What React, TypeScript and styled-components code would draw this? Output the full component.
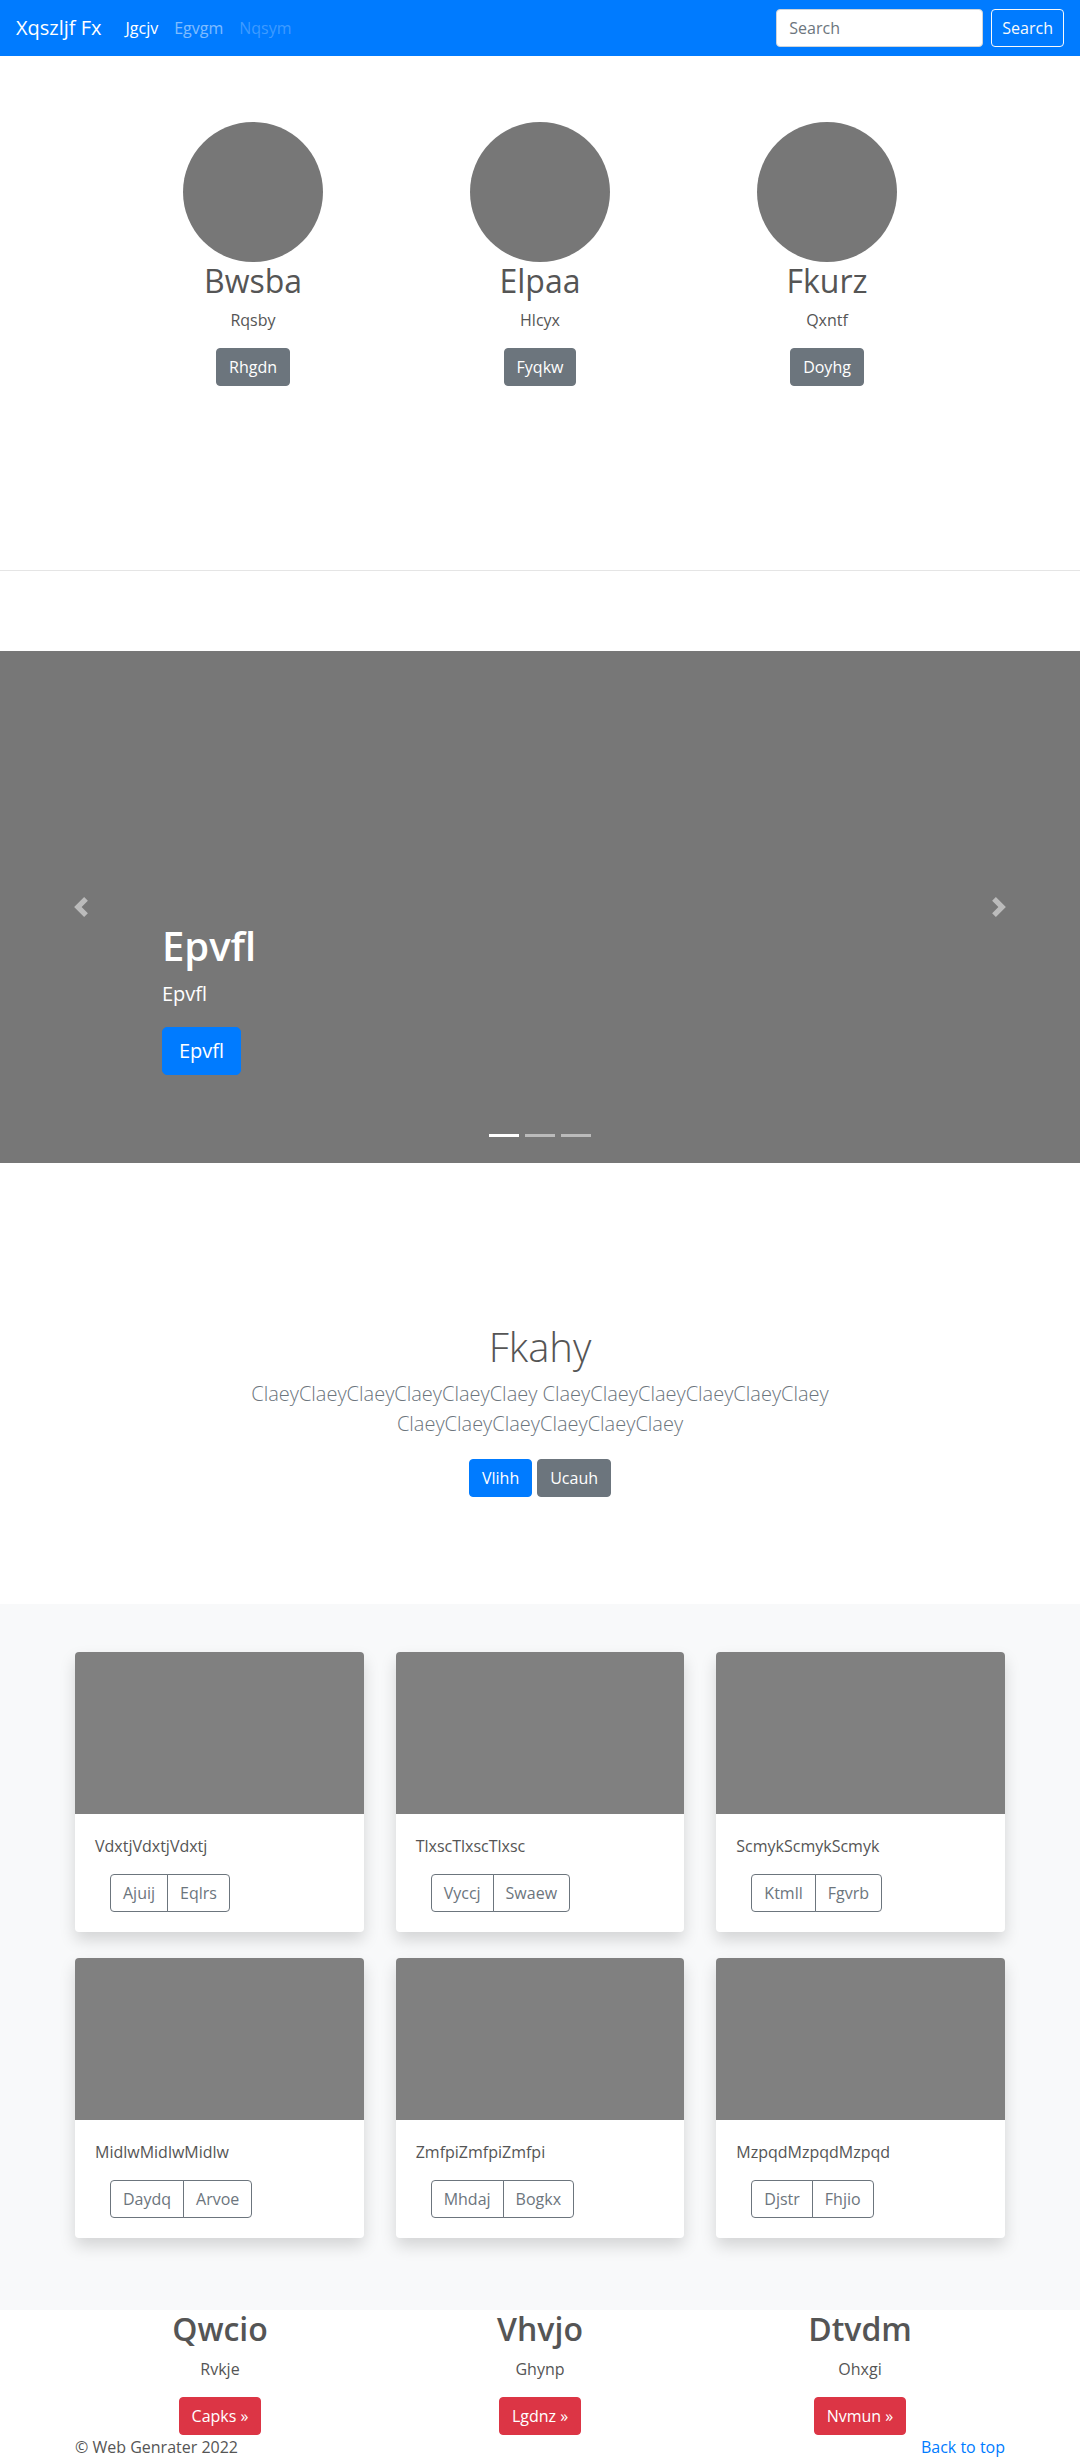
import styled, { createGlobalStyle } from "styled-components";

const GlobalStyles = createGlobalStyle`
  * {
    box-sizing: border-box;
  }

  body {
    margin: 0;
    font-family: "Segoe UI", "Open Sans", "Noto Sans", sans-serif;
    font-size: 16px;
    line-height: 1.5;
    color: #555;
    background: #fff;
  }

  h1, h2, p {
    margin: 0;
  }
`;

type Variant = "primary" | "secondary" | "danger";

const variantColors: Record<Variant, string> = {
  primary: "#007bff",
  secondary: "#6c757d",
  danger: "#dc3545",
};

const team = [
  { name: "Bwsba", role: "Rqsby", action: "Rhgdn" },
  { name: "Elpaa", role: "Hlcyx", action: "Fyqkw" },
  { name: "Fkurz", role: "Qxntf", action: "Doyhg" },
];

const cards = [
  { text: "VdxtjVdxtjVdxtj", actions: ["Ajuij", "Eqlrs"] },
  { text: "TlxscTlxscTlxsc", actions: ["Vyccj", "Swaew"] },
  { text: "ScmykScmykScmyk", actions: ["Ktmll", "Fgvrb"] },
  { text: "MidlwMidlwMidlw", actions: ["Daydq", "Arvoe"] },
  { text: "ZmfpiZmfpiZmfpi", actions: ["Mhdaj", "Bogkx"] },
  { text: "MzpqdMzpqdMzpqd", actions: ["Djstr", "Fhjio"] },
];

const features = [
  { title: "Qwcio", text: "Rvkje", action: "Capks" },
  { title: "Vhvjo", text: "Ghynp", action: "Lgdnz" },
  { title: "Dtvdm", text: "Ohxgi", action: "Nvmun" },
];

function Chevron({ dir }: { dir: "prev" | "next" }): JSX.Element {
  const d =
    dir === "prev"
      ? "M5.25 0l-4 4 4 4 1.5-1.5L4.25 4l2.5-2.5L5.25 0z"
      : "M2.75 0l-1.5 1.5L3.75 4l-2.5 2.5L2.75 8l4-4-4-4z";
  return (
    <svg width="20" height="20" viewBox="0 0 8 8" fill="#fff">
      <path d={d} />
    </svg>
  );
}

function App(): JSX.Element {
  return (
    <>
      <GlobalStyles />
      <Navbar>
        <Brand>Xqszljf Fx</Brand>
        <NavLinks>
          <NavLink $state="active">Jgcjv</NavLink>
          <NavLink $state="normal">Egvgm</NavLink>
          <NavLink $state="disabled">Nqsym</NavLink>
        </NavLinks>
        <SearchForm>
          <SearchInput placeholder="Search" />
          <OutlineLightButton>Search</OutlineLightButton>
        </SearchForm>
      </Navbar>

      <Marketing>
        {team.map((m) => (
          <Member key={m.name}>
            <Avatar />
            <MemberName>{m.name}</MemberName>
            <MemberRole>{m.role}</MemberRole>
            <Button $variant="secondary">{m.action}</Button>
          </Member>
        ))}
      </Marketing>

      <Divider />

      <Carousel>
        <Control $side="prev">
          <Chevron dir="prev" />
        </Control>
        <Caption>
          <CaptionTitle>Epvfl</CaptionTitle>
          <CaptionText>Epvfl</CaptionText>
          <LargeButton>Epvfl</LargeButton>
        </Caption>
        <Control $side="next">
          <Chevron dir="next" />
        </Control>
        <Indicators>
          <Indicator $active />
          <Indicator />
          <Indicator />
        </Indicators>
      </Carousel>

      <Jumbotron>
        <JumboTitle>Fkahy</JumboTitle>
        <Lead>
          ClaeyClaeyClaeyClaeyClaeyClaey ClaeyClaeyClaeyClaeyClaeyClaey
          ClaeyClaeyClaeyClaeyClaeyClaey
        </Lead>
        <JumboActions>
          <Button $variant="primary">Vlihh</Button>
          <Button $variant="secondary">Ucauh</Button>
        </JumboActions>
      </Jumbotron>

      <Album>
        <CardGrid>
          {cards.map((c) => (
            <Card key={c.text}>
              <CardImage />
              <CardBody>
                <CardText>{c.text}</CardText>
                <ButtonGroup>
                  {c.actions.map((a) => (
                    <OutlineButton key={a}>{a}</OutlineButton>
                  ))}
                </ButtonGroup>
              </CardBody>
            </Card>
          ))}
        </CardGrid>
      </Album>

      <Features>
        {features.map((f) => (
          <Feature key={f.title}>
            <FeatureTitle>{f.title}</FeatureTitle>
            <FeatureText>{f.text}</FeatureText>
            <Button $variant="danger">{f.action} &raquo;</Button>
          </Feature>
        ))}
      </Features>

      <Footer>
        <span>&copy; Web Genrater 2022</span>
        <FooterLink href="#">Back to top</FooterLink>
      </Footer>
    </>
  );
}

export default App;

const Navbar = styled.nav`
  display: flex;
  align-items: center;
  height: 56px;
  padding: 0 16px;
  background: #007bff;
`;

const Brand = styled.a`
  font-size: 20px;
  line-height: 30px;
  color: #fff;
  margin-right: 16px;
  white-space: nowrap;
`;

const NavLinks = styled.div`
  display: flex;
  flex: 1;
`;

const NavLink = styled.a<{ $state: "active" | "normal" | "disabled" }>`
  padding: 8px;
  font-size: 16px;
  line-height: 24px;
  color: ${({ $state }) =>
    $state === "active"
      ? "#fff"
      : $state === "normal"
      ? "rgba(255, 255, 255, 0.5)"
      : "rgba(255, 255, 255, 0.25)"};
`;

const SearchForm = styled.form`
  display: flex;
  align-items: center;
`;

const SearchInput = styled.input`
  width: 207px;
  height: 38px;
  margin-right: 8px;
  padding: 6px 12px;
  font: inherit;
  font-size: 16px;
  color: #495057;
  background: #fff;
  border: 1px solid #ced4da;
  border-radius: 4px;

  &::placeholder {
    color: #6c757d;
  }
`;

const OutlineLightButton = styled.button`
  height: 38px;
  padding: 6px 10px;
  font: inherit;
  font-size: 16px;
  color: #f8f9fa;
  background: transparent;
  border: 1px solid #f8f9fa;
  border-radius: 4px;
`;

const Button = styled.button<{ $variant: Variant }>`
  display: inline-block;
  height: 38px;
  padding: 6px 12px;
  font: inherit;
  font-size: 16px;
  line-height: 24px;
  color: #fff;
  background: ${({ $variant }) => variantColors[$variant]};
  border: 1px solid ${({ $variant }) => variantColors[$variant]};
  border-radius: 4px;
  white-space: nowrap;
`;

const Marketing = styled.section`
  display: grid;
  grid-template-columns: repeat(3, 287px);
  justify-content: center;
  padding: 66px 0 104px;
  text-align: center;
`;

const Member = styled.div`
  display: flex;
  flex-direction: column;
  align-items: center;
`;

const Avatar = styled.div`
  width: 140px;
  height: 140px;
  border-radius: 50%;
  background: #777;
`;

const MemberName = styled.h2`
  font-size: 32px;
  font-weight: 400;
  line-height: 1.2;
  margin-bottom: 8px;
`;

const MemberRole = styled.p`
  margin-bottom: 16px;
`;

const Divider = styled.hr`
  margin: 80px 0;
  border: 0;
  border-top: 1px solid rgba(0, 0, 0, 0.1);
`;

const Carousel = styled.section`
  position: relative;
  height: 512px;
  margin-bottom: 64px;
  background: #777;
`;

const Control = styled.div<{ $side: "prev" | "next" }>`
  position: absolute;
  top: 0;
  bottom: 0;
  ${({ $side }) => ($side === "prev" ? "left: 0;" : "right: 0;")}
  width: 15%;
  display: flex;
  align-items: center;
  justify-content: center;
  opacity: 0.5;
`;

const Caption = styled.div`
  position: absolute;
  left: 15%;
  right: 15%;
  bottom: 48px;
  padding: 20px 0;
  color: #fff;
  text-align: left;
`;

const CaptionTitle = styled.h1`
  font-size: 40px;
  font-weight: 600;
  line-height: 1.2;
  margin-bottom: 9px;
`;

const CaptionText = styled.p`
  font-size: 20px;
  line-height: 30px;
  margin-bottom: 18px;
`;

const LargeButton = styled.button`
  display: block;
  height: 48px;
  margin-bottom: 20px;
  padding: 8px 16px;
  font: inherit;
  font-size: 20px;
  line-height: 30px;
  color: #fff;
  background: #007bff;
  border: 1px solid #007bff;
  border-radius: 5px;
`;

const Indicators = styled.div`
  position: absolute;
  left: 0;
  right: 0;
  bottom: 26px;
  display: flex;
  justify-content: center;
  gap: 6px;
`;

const Indicator = styled.span<{ $active?: boolean }>`
  width: 30px;
  height: 3px;
  background: ${({ $active }) => ($active ? "#fff" : "rgba(255, 255, 255, 0.5)")};
`;

const Jumbotron = styled.section`
  padding: 96px 0 99px;
  text-align: center;
`;

const JumboTitle = styled.h1`
  font-size: 40px;
  font-weight: 300;
  line-height: 1.2;
  margin-bottom: 8px;
`;

const Lead = styled.p`
  max-width: 640px;
  margin: 0 auto 20px;
  font-size: 20px;
  font-weight: 300;
  line-height: 30px;
  color: #6c757d;
`;

const JumboActions = styled.div`
  display: flex;
  justify-content: center;
  gap: 5px;
  padding-bottom: 8px;
`;

const Album = styled.section`
  padding: 48px 0 72px;
  background: #f8f9fa;
`;

const CardGrid = styled.div`
  display: grid;
  grid-template-columns: repeat(3, 1fr);
  gap: 26px 32px;
  width: 930px;
  margin: 0 auto;
`;

const Card = styled.div`
  background: #fff;
  border-radius: 4px;
  overflow: hidden;
  box-shadow: 0 8px 16px rgba(0, 0, 0, 0.15);
`;

const CardImage = styled.div`
  height: 162px;
  background: #808080;
`;

const CardBody = styled.div`
  padding: 20px;
`;

const CardText = styled.p`
  margin-bottom: 16px;
`;

const ButtonGroup = styled.div`
  display: inline-flex;
  margin-left: 15px;
`;

const OutlineButton = styled.button`
  height: 38px;
  padding: 6px 12px;
  font: inherit;
  font-size: 16px;
  line-height: 24px;
  color: #6c757d;
  background: transparent;
  border: 1px solid #6c757d;
  border-radius: 0;

  &:first-child {
    border-radius: 4px 0 0 4px;
  }

  &:last-child {
    margin-left: -1px;
    border-radius: 0 4px 4px 0;
  }
`;

const Features = styled.section`
  display: grid;
  grid-template-columns: repeat(3, 320px);
  justify-content: center;
  text-align: center;
`;

const Feature = styled.div`
  display: flex;
  flex-direction: column;
  align-items: center;
`;

const FeatureTitle = styled.h2`
  font-size: 32px;
  font-weight: 600;
  line-height: 1.2;
  margin-bottom: 8px;
`;

const FeatureText = styled.p`
  margin-bottom: 16px;
`;

const Footer = styled.footer`
  display: flex;
  justify-content: space-between;
  width: 930px;
  margin: 0 auto;
  line-height: 24px;
`;

const FooterLink = styled.a`
  color: #007bff;
  text-decoration: none;
`;
